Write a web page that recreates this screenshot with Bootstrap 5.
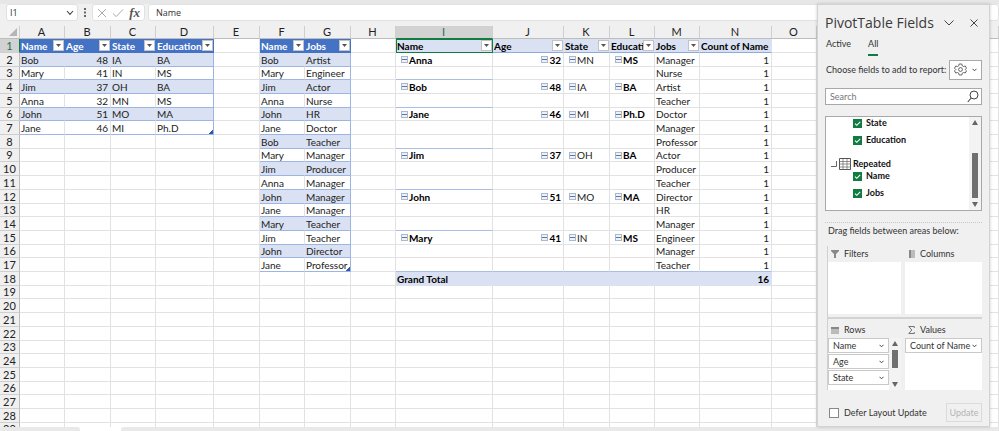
<!DOCTYPE html>
<html lang="en">
<head>
<meta charset="utf-8">
<meta name="viewport" content="width=device-width, initial-scale=1">
<title>Workbook</title>
<link href="https://cdn.jsdelivr.net/npm/bootstrap@5.3.0/dist/css/bootstrap.min.css" rel="stylesheet">
<style>
  :root { --ui: "Open Sans", "Noto Sans", sans-serif; --cellfont: "Lato", "Noto Sans", sans-serif; --blue: #4472c4; --band: #d9e1f2; --edge: #9db5e2; --green: #107c41; }
  body { font-family: var(--cellfont); font-size: 9px; line-height: 12px; color: #333; background: #f0f0f0; }
  button, input { font: inherit; color: inherit; }
  svg { display: block; flex: none; }
  .plain { border: 0; background: none; padding: 0; display: flex; align-items: center; justify-content: center; }

  .formula { border-top: 4px solid #e7e7e7; padding: 0 0 5px 6px; background: #f0f0f0; gap: 3px; font-family: var(--ui); }
  .bar-box { background: #fff; border: 1px solid #e1e1e1; border-radius: 3px; height: 17px; }
  .bar-box input { border: 0; background: none; outline: 0; min-width: 0; padding: 0 3px; line-height: 12px; }
  .name-box { width: 72px; padding-right: 3px; }
  .fx-box { width: 53px; padding: 0 4px; gap: 5px; }
  .fx-label { font: italic 700 13px/14px "Liberation Serif", serif; color: #555; }
  .dots { width: 8px; }

  .sheet { background: #fff; }
  .gridtable { table-layout: fixed; width: 100%; border-collapse: separate; border-spacing: 0; font-family: var(--cellfont); font-size: 10px; line-height: 12px; color: #222; }
  .gridtable th, .gridtable td { padding: 0 2px 0 1px; border-right: 1px solid #e2e2e2; border-bottom: 1px solid #e2e2e2; white-space: nowrap; overflow: hidden; height: 14px; font-weight: 400; }
  .gridtable tbody tr:nth-child(10n+3) > *, .gridtable tbody tr:nth-child(10n+6) > *, .gridtable tbody tr:nth-child(10n+9) > * { height: 13px; }
  .gridtable thead th { height: 13px; background: #f0f0f0; text-align: center; border-right-color: #cfcfcf; border-bottom-color: #bdbdbd; font-size: 11px; }
  .gridtable thead .sel-col { background: #d2d2d2; color: #217346; border-bottom-color: var(--green); }
  .gridtable tbody th { background: #f0f0f0; text-align: center; border-right-color: #bdbdbd; border-bottom-color: #cfcfcf; padding: 0; font-size: 11px; }
  .gridtable tbody .sel-row { background: #d2d2d2; color: #217346; border-right-color: var(--green); }
  .gridtable .t-head { background: var(--blue); color: #fff; font-weight: 700; border-color: var(--blue); padding-right: 0; }
  .gridtable .t-body { border-bottom-color: var(--edge); }
  .gridtable .t-band { background: var(--band); border-right-color: var(--band); }
  .gridtable .t-last { border-right-color: var(--edge); }
  .gridtable .p-head { background: var(--band); border-right-color: var(--band); border-bottom-color: #8ea9db; font-weight: 700; color: #000; padding-right: 0; }
  .gridtable .p-rule { border-bottom-color: #a9bee6; }
  .gridtable .p-total { background: var(--band); border-color: var(--band); font-weight: 700; color: #000; }
  .gridtable .active-cell { outline: 1px solid var(--green); outline-offset: -1px; border-color: var(--green); }
  .gridtable .corner-mark { background-image: linear-gradient(135deg, transparent 50%, #3353b5 50%); background-size: 4px 4px; background-position: right bottom; background-repeat: no-repeat; }
  .strong { font-weight: 700; color: #000; }
  .indent { padding-left: 4px; }
  .cell-text { min-width: 0; overflow: hidden; }
  .drop { width: 11px; height: 11px; flex: none; background: #fff; border: 1px solid #c3c3c3; }
  .fold { width: 7px; height: 7px; flex: none; border: 1px solid #a9b8cf; background: linear-gradient(#5d77a8, #5d77a8) center / 5px 1px no-repeat #eef2f8; margin-right: 1px; }

  .tabs-strip { height: 4px; background: #fff; }
  .tabs-strip .left-strip { width: 80px; background: #e9e9e9; border-top-right-radius: 3px; }
  .tabs-strip .right-strip { margin-left: 41px; background: #e9e9e9; border-top-left-radius: 3px; }

  .pane { position: absolute; top: 4px; right: 9px; bottom: 4px; width: 173px; background: #f0f0f0; border: 1px solid #d3d3d3; box-shadow: 0 0 3px rgba(0,0,0,.2); padding: 0 7px; overflow: hidden; }
  .pane > * { flex: none; }
  .pane-title { font-family: var(--ui); font-size: 14px; line-height: 20px; font-weight: 400; margin: 0; color: #3a3a3a; }
  .pane-top { height: 33px; padding-top: 2px; }
  .pane-tabs { gap: 17px; height: 18px; padding-left: 1px; }
  .pane-tabs button { border: 0; border-bottom: 2px solid transparent; background: none; padding: 0 0 4px; }
  .pane-tabs .current { border-color: var(--green); }
  .choose { height: 25px; margin-top: 1px; padding-left: 1px; }
  .gear { width: 33px; height: 20px; background: #fff; border: 1px solid #a8a8a8; padding: 0; gap: 5px; }
  .search { height: 17px; margin-top: 6px; background: #fff; border: 1px solid #a8a8a8; padding: 0 2px 0 4px; }
  .search input { border: 0; outline: 0; background: none; min-width: 0; padding: 0; }
  .search input::placeholder { color: #777; opacity: 1; }
  .fields { height: 95px; margin-top: 11px; background: #fff; border: 1px solid #a8a8a8; color: #111; font-weight: 700; overflow: hidden; }
  .fields label { display: flex; align-items: center; gap: 4px; height: 12px; margin: 0 0 5px 27px; }
  .fields .source { height: 12px; margin-top: 12px; padding-left: 5px; gap: 2px; }
  .tick { appearance: none; width: 9px; height: 9px; margin: 0; background: var(--green) url("data:image/svg+xml,%3Csvg xmlns='http://www.w3.org/2000/svg' viewBox='0 0 9 9'%3E%3Cpath d='M2 4.6 3.8 6.3 7.2 2.8' fill='none' stroke='white' stroke-width='1.1'/%3E%3C/svg%3E") center / 9px 9px; }
  .scroller { width: 12px; background: #f3f3f3; padding: 3px 0; flex: none; }
  .thumb { width: 6px; background: #707070; }
  .scroller .tall { height: 45px; margin: auto 0 4px; }
  .scroller .short { height: 18px; margin: 4px 0 auto; }
  .drag { border-top: 1px dotted #c9c9c9; margin-top: 11px; padding: 2px 3px 9px; white-space: nowrap; }
  .areas { display: grid; grid-template-columns: 73px 1fr; column-gap: 4px; margin-left: 2px; border-left: 1px solid #d0d0d0; }
  .areas h2 { font-size: 9px; line-height: 12px; font-weight: 400; margin: 0; height: 16px; display: flex; align-items: center; gap: 5px; padding-left: 3px; }
  .area-box { height: 52px; background: #fff; overflow: hidden; }
  .areas .split { grid-column: 1 / -1; height: 2px; background: #d3d3d3; margin: 3px 0; }
  .chips { gap: 1px; }
  .chip { height: 15px; flex: none; background: #fff; border: 1px solid #c9c9c9; padding: 0 4px; display: flex; align-items: center; justify-content: space-between; white-space: nowrap; }
  .defer { margin-top: 13px; padding-left: 4px; height: 19px; }
  .defer input { appearance: none; width: 10px; height: 10px; margin: 0; background: #fff; border: 1px solid #888; }
  .defer label { gap: 5px; display: flex; align-items: center; }
  .update { width: 36px; height: 19px; padding: 0; border: 1px solid #dadada; background: #f0f0f0; }
  .update:disabled { color: #b5b5b5; }
</style>
<script src="https://cdn.jsdelivr.net/npm/bootstrap@5.3.0/dist/js/bootstrap.bundle.min.js"></script>
</head>
<body class="vh-100 overflow-hidden position-relative d-flex flex-column">

<header class="formula d-flex align-items-center">
  <div class="bar-box name-box d-flex align-items-center">
    <input class="flex-grow-1 w-100" aria-label="Name box" value="I1">
    <button class="plain" aria-label="Named ranges"><svg width="8" height="6" viewBox="0 0 8 6"><path d="M1 1 4 4.4 7 1" fill="none" stroke="#444" stroke-width="1.1"/></svg></button>
  </div>
  <svg class="dots" viewBox="0 0 7 10" width="7" height="10"><path d="M2.500 0h2v2h-2zM2.500 3.500h2v2h-2zM2.500 7h2v2h-2z" fill="#666"/></svg>
  <div class="bar-box fx-box d-flex align-items-center justify-content-between">
    <button class="plain" aria-label="Cancel"><svg width="10" height="10" viewBox="0 0 10 10"><path d="M1 1 9 9M9 1 1 9" stroke="#aaa" fill="none"/></svg></button>
    <button class="plain" aria-label="Enter"><svg width="12" height="10" viewBox="0 0 12 10"><path d="M1 5.5 4.2 8.6 11 1.4" stroke="#aaa" fill="none"/></svg></button>
    <button class="plain fx-label" aria-label="Insert function">fx</button>
  </div>
  <div class="bar-box flex-grow-1 d-flex align-items-center ps-1">
    <input class="w-100" aria-label="Formula" value="Name">
  </div>
</header>

<main class="sheet flex-grow-1 overflow-hidden">
  <table class="gridtable" id="grid"></table>
</main>

<footer class="tabs-strip d-flex flex-shrink-0">
  <div class="left-strip"></div>
  <div class="right-strip flex-grow-1"></div>
</footer>

<aside class="pane d-flex flex-column">
  <div class="pane-top d-flex align-items-center justify-content-between">
    <h1 class="pane-title text-nowrap">PivotTable Fields</h1>
    <div class="d-flex align-items-center gap-3 pe-1">
      <button class="plain" aria-label="Pane options"><svg width="10" height="6" viewBox="0 0 10 6"><path d="M.5.5 5 5 9.5.5" fill="none" stroke="#444"/></svg></button>
      <button class="plain" aria-label="Close"><svg width="8" height="8" viewBox="0 0 8 8"><path d="M.5.5l7 7M7.5.5l-7 7" fill="none" stroke="#444"/></svg></button>
    </div>
  </div>
  <nav class="pane-tabs d-flex align-items-start">
    <button>Active</button>
    <button class="current">All</button>
  </nav>
  <div class="choose d-flex align-items-center justify-content-between">
    <span class="text-nowrap">Choose fields to add to report:</span>
    <button class="gear d-flex align-items-center justify-content-center" aria-label="Tools">
      <svg width="13" height="13" viewBox="0 0 13 13" fill="none" stroke="#555"><path d="M5.2 1h2.600l.5 1.800 1.200.7 1.800-.5 1.200 2.200-1.300 1.300 1.300 1.300-1.200 2.200-1.800-.5-1.200.7-.5 1.800H5.200l-.5-1.800-1.200-.7-1.800.5L.5 7.800l1.300-1.300L.5 5.200 1.700 3l1.800.5 1.200-.7z" stroke-width=".9"/><circle cx="6.5" cy="6.5" r="1.9" stroke-width=".9"/></svg>
      <svg width="5" height="4" viewBox="0 0 5 4"><path d="M.5.8 2.500 2.800 4.500.8" fill="none" stroke="#444"/></svg>
    </button>
  </div>
  <div class="search d-flex align-items-center">
    <input class="flex-grow-1" type="search" aria-label="Search fields" placeholder="Search">
    <svg width="12" height="13" viewBox="0 0 12 13"><circle cx="7" cy="5" r="4" fill="none" stroke="#444"/><path d="M4.2 8 .8 12" stroke="#444" stroke-width="1.1"/></svg>
  </div>
  <div class="fields d-flex">
    <div class="fields-list flex-grow-1">
      <label><input class="tick" type="checkbox" checked>State</label>
      <label><input class="tick" type="checkbox" checked>Education</label>
      <div class="source d-flex align-items-center">
        <svg width="6" height="6" viewBox="0 0 6 6"><path d="M5.5 0v5.5H0" fill="none" stroke="#666"/></svg>
        <svg width="12" height="12" viewBox="0 0 12 12"><path d="M.5.5h11v11H.5z" fill="#fff" stroke="#555"/><path d="M.5 3.500h11M.5 6h11M.5 9h11M4 1v10.500M8 1v10.500" stroke="#777" stroke-width=".8"/></svg>
        <span>Repeated</span>
      </div>
      <label><input class="tick" type="checkbox" checked>Name</label>
      <label><input class="tick" type="checkbox" checked>Jobs</label>
    </div>
    <div class="scroller d-flex flex-column align-items-center">
      <svg width="6" height="5" viewBox="0 0 6 5"><path d="M3 0 6 5H0z" fill="#666"/></svg>
      <div class="thumb tall"></div>
      <svg width="6" height="5" viewBox="0 0 6 5"><path d="M3 5 6 0H0z" fill="#666"/></svg>
    </div>
  </div>
  <div class="drag">Drag fields between areas below:</div>
  <div class="areas">
    <h2><svg width="8" height="8" viewBox="0 0 8 8"><path d="M0 0h8v1L5 4v4H3V4L0 1z" fill="#888"/></svg>Filters</h2>
    <h2><svg width="7" height="8" viewBox="0 0 7 8"><path d="M1 0h2.500v8H1z" fill="#888"/><path d="M3.500 0H7v8H3.500z" fill="#bbb"/></svg>Columns</h2>
    <div class="area-box"></div>
    <div class="area-box"></div>
    <div class="split"></div>
    <h2><svg width="8" height="7" viewBox="0 0 8 7"><path d="M0 0h8v2.500H0z" fill="#888"/><path d="M0 2.500h8V7H0z" fill="#bbb"/></svg>Rows</h2>
    <h2><svg width="7" height="8" viewBox="0 0 7 8"><path d="M6.300 2V.5H.8L3.800 4 .8 7.500h5.500V6" fill="none" stroke="#666" stroke-width=".9"/></svg>Values</h2>
    <div class="area-box d-flex">
      <div class="chips d-flex flex-column flex-grow-1" id="rowChips"></div>
      <div class="scroller d-flex flex-column align-items-center">
        <svg width="6" height="5" viewBox="0 0 6 5"><path d="M3 0 6 5H0z" fill="#666"/></svg>
        <div class="thumb short"></div>
        <svg width="6" height="5" viewBox="0 0 6 5"><path d="M3 5 6 0H0z" fill="#666"/></svg>
      </div>
    </div>
    <div class="area-box d-flex flex-column" id="valueChips"></div>
  </div>
  <div class="defer d-flex align-items-center justify-content-between">
    <label class="text-nowrap"><input type="checkbox">Defer Layout Update</label>
    <button class="update" disabled>Update</button>
  </div>
</aside>

<script>
  const widths = [20, 45, 46, 45, 58, 46, 45, 46, 45, 97, 71, 46, 45, 45, 72, 45, 46, 45, 46, 45];
  const letters = "ABCDEFGHIJKLMNOPQRS".split("");
  const people = [["Bob", 48, "IA", "BA"], ["Mary", 41, "IN", "MS"], ["Jim", 37, "OH", "BA"], ["Anna", 32, "MN", "MS"], ["John", 51, "MO", "MA"], ["Jane", 46, "MI", "Ph.D"]];
  const jobs = ["Bob Artist", "Mary Engineer", "Jim Actor", "Anna Nurse", "John HR", "Jane Doctor", "Bob Teacher", "Mary Manager", "Jim Producer", "Anna Manager", "John Manager", "Jane Manager", "Mary Teacher", "Jim Teacher", "John Director", "Jane Professor"].map(s => s.split(" "));
  const pivot = [["Anna", ["Manager", "Nurse"]], ["Bob", ["Artist", "Teacher"]], ["Jane", ["Doctor", "Manager", "Professor"]], ["Jim", ["Actor", "Producer", "Teacher"]], ["John", ["Director", "HR", "Manager"]], ["Mary", ["Engineer", "Manager", "Teacher"]]];
  const cells = {};
  const put = (ref, html, cls = "") => { cells[ref] = { html, cls }; };
  const caret = '<svg width="5" height="3" viewBox="0 0 5 3"><path d="M0 0h5L2.500 3z" fill="#555"/></svg>';
  const head = t => `<div class="d-flex align-items-center"><span class="cell-text flex-grow-1">${t}</span><button class="plain drop" aria-label="Filter ${t}">${caret}</button></div>`;
  const fold = (t, side, cls) => `<div class="d-flex align-items-center justify-content-${side} ${cls}"><button class="plain fold" aria-label="Collapse ${t}"></button>${t}</div>`;

  ["Name", "Age", "State", "Education"].forEach((t, i) => put("ABCD"[i] + 1, head(t), "t-head"));
  people.forEach((p, r) => p.forEach((v, c) => put("ABCD"[c] + (r + 2), v,
    "t-body" + (r % 2 ? "" : " t-band") + (c === 3 ? " t-last" : "") + (c === 1 ? " text-end" : "") + (r === 5 && c === 3 ? " corner-mark" : ""))));
  ["Name", "Jobs"].forEach((t, i) => put("FG"[i] + 1, head(t), "t-head"));
  jobs.forEach((p, r) => p.forEach((v, c) => put("FG"[c] + (r + 2), v,
    "t-body" + (r % 2 ? "" : " t-band") + (c ? " t-last" : "") + (r === 15 && c ? " corner-mark" : ""))));
  ["Name", "Age", "State", "Educati", "Jobs"].forEach((t, i) => put("IJKLM"[i] + 1, head(t), "p-head" + (i ? "" : " active-cell")));
  put("N1", "Count of Name", "p-head");
  let row = 2;
  pivot.forEach(([name, list]) => {
    const [, age, state, edu] = people.find(p => p[0] === name);
    put("I" + row, fold(name, "start", "strong indent"));
    put("J" + row, fold(age, "end", "strong"));
    put("K" + row, fold(state, "start", "indent"));
    put("L" + row, fold(edu, "start", "strong indent"));
    list.forEach(j => {
      const rule = row === 17 ? "p-rule" : "";
      put("M" + row, j, rule);
      put("N" + row, 1, "text-end " + rule);
      row++;
    });
    put("I" + (row - 1), "", "p-rule");
  });
  ["J17", "K17", "L17"].forEach(ref => put(ref, "", "p-rule"));
  "IJKLMN".split("").forEach(c => put(c + 18, c === "I" ? "Grand Total" : c === "N" ? "16" : "", "p-total" + (c === "N" ? " text-end" : "")));

  let html = "<colgroup>" + widths.map(w => `<col style="width:${w}px">`).join("") + "<col></colgroup>";
  html += '<thead><tr><th><svg class="ms-auto" width="8" height="8" viewBox="0 0 8 8"><path d="M8 0v8H0z" fill="#b5b5b5"/></svg></th>' +
    letters.map(l => `<th${l === "I" ? ' class="sel-col"' : ""}>${l > "O" ? "" : l}</th>`).join("") + "<th></th></tr></thead><tbody>";
  for (let r = 1; r <= 29; r++) {
    html += `<tr><th${r === 1 ? ' class="sel-row"' : ""}>${r}</th>` +
      letters.map(l => { const c = cells[l + r]; return c ? `<td class="${c.cls}">${c.html}</td>` : "<td></td>"; }).join("") + "<td></td></tr>";
  }
  document.getElementById("grid").innerHTML = html + "</tbody>";

  const chip = t => `<button class="chip">${t}<svg width="5" height="4" viewBox="0 0 5 4"><path d="M.5.8 2.500 2.800 4.500.8" fill="none" stroke="#444"/></svg></button>`;
  document.getElementById("rowChips").innerHTML = ["Name", "Age", "State"].map(chip).join("");
  document.getElementById("valueChips").innerHTML = chip("Count of Name");
</script>
</body>
</html>
